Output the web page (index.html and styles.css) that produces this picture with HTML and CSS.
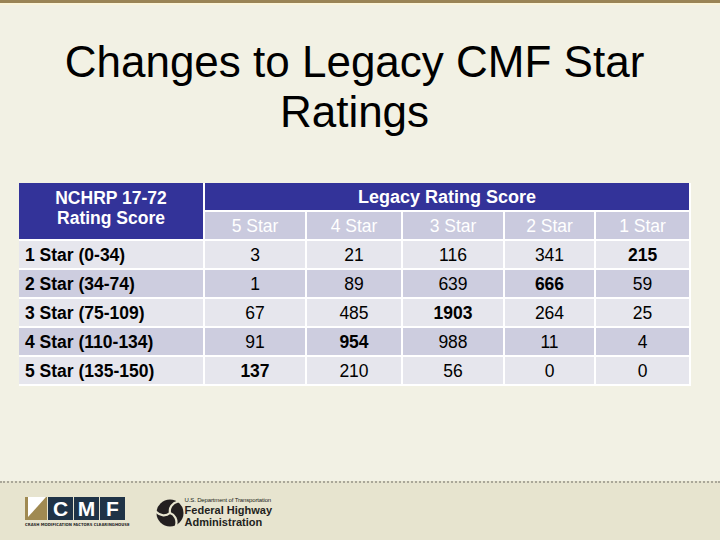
FILE: index.html
```html
<!DOCTYPE html>
<html lang="en">
<head>
<meta charset="utf-8">
<title>Changes to Legacy CMF Star Ratings</title>
<link rel="stylesheet" href="styles.css">
</head>
<body>
<div class="slide">
  <div class="topbar"></div>
  <h1 class="title">Changes to Legacy CMF Star<br>Ratings</h1>
  <table class="ratings">
    <colgroup>
      <col class="c0"><col class="c1"><col class="c2"><col class="c3"><col class="c4"><col class="c5">
    </colgroup>
    <thead>
      <tr>
        <th rowspan="2" class="corner">NCHRP 17-72<br>Rating Score</th>
        <th colspan="5" class="group">Legacy Rating Score</th>
      </tr>
      <tr class="sub">
        <th>5 Star</th><th>4 Star</th><th>3 Star</th><th>2 Star</th><th>1 Star</th>
      </tr>
    </thead>
    <tbody>
      <tr class="light">
        <td class="label">1 Star (0-34)</td><td>3</td><td>21</td><td>116</td><td>341</td><td class="hi">215</td>
      </tr>
      <tr class="dark">
        <td class="label">2 Star (34-74)</td><td>1</td><td>89</td><td>639</td><td class="hi">666</td><td>59</td>
      </tr>
      <tr class="light">
        <td class="label">3 Star (75-109)</td><td>67</td><td>485</td><td class="hi">1903</td><td>264</td><td>25</td>
      </tr>
      <tr class="dark">
        <td class="label">4 Star (110-134)</td><td>91</td><td class="hi">954</td><td>988</td><td>11</td><td>4</td>
      </tr>
      <tr class="light">
        <td class="label">5 Star (135-150)</td><td class="hi">137</td><td>210</td><td>56</td><td>0</td><td>0</td>
      </tr>
    </tbody>
  </table>
  <footer class="footer">
    <div class="cmf">
      <div class="cmf-mark">
        <svg class="cmf-corner" width="22" height="23" viewBox="0 0 22 23">
          <rect width="22" height="23" fill="#a08a52"/>
          <path d="M3 0 H21 Q13 9 3 20 Z" fill="#ffffff"/>
        </svg>
        <span class="cmf-box">C</span><span class="cmf-box">M</span><span class="cmf-box">F</span>
      </div>
      <div class="cmf-tag">CRASH MODIFICATION FACTORS CLEARINGHOUSE</div>
    </div>
    <div class="fhwa">
      <svg class="fhwa-mark" width="28" height="28" viewBox="0 0 28 28">
        <circle cx="14" cy="14" r="13.5" fill="#231f20"/>
        <g fill="none" stroke="#e8e5d0" stroke-width="2.2" stroke-linecap="round">
          <path d="M14 14 C13 9 16 4 22 2.5"/>
          <path d="M14 14 C13 9 16 4 22 2.5" transform="rotate(120 14 14)"/>
          <path d="M14 14 C13 9 16 4 22 2.5" transform="rotate(240 14 14)"/>
        </g>
      </svg>
      <div class="fhwa-text">
        <div class="fhwa-dept">U.S. Department of Transportation</div>
        <div class="fhwa-name">Federal Highway<br>Administration</div>
      </div>
    </div>
  </footer>
</div>
</body>
</html>
```

FILE: styles.css
```css
html, body {
  margin: 0;
  padding: 0;
}

body {
  background: #f2f1e4;
  font-family: "Liberation Sans", Arial, sans-serif;
  color: #000;
}

.slide {
  width: 720px;
  height: 540px;
  display: flex;
  flex-direction: column;
  overflow: hidden;
}

.topbar {
  flex: none;
  height: 3px;
  background: #9a8456;
  border-bottom: 2px solid #fbf4d8;
}

.title {
  flex: none;
  margin: 32px 11px 0 0;
  font-size: 44px;
  line-height: 50px;
  font-weight: normal;
  text-align: center;
}

.ratings {
  flex: none;
  margin: 46px 0 0 19px;
  width: 672px;
  table-layout: fixed;
  border-collapse: separate;
  border-spacing: 0;
}

.c0 { width: 186px; }
.c1 { width: 102px; }
.c2 { width: 96px; }
.c3 { width: 102px; }
.c4 { width: 91px; }
.c5 { width: 95px; }

.ratings th,
.ratings td {
  padding: 2px 0 0;
  font-size: 17.5px;
  line-height: 25px;
  text-align: center;
  border-right: 2px solid #fff;
  border-bottom: 2px solid #fff;
  white-space: nowrap;
}

.ratings .corner {
  background: #333399;
  color: #fff;
  font-weight: bold;
  vertical-align: top;
  padding-top: 5px;
  line-height: 20px;
}

.ratings .group {
  background: #333399;
  color: #fff;
  font-weight: bold;
  font-size: 18px;
}

.sub th {
  background: #cacade;
  color: #fff;
  font-weight: normal;
}

.light td { background: #e6e6ed; }
.dark td { background: #cdcddf; }

.ratings .label {
  text-align: left;
  padding-left: 6px;
  font-weight: bold;
}

.ratings .hi { font-weight: bold; }

.footer {
  margin-top: auto;
  flex: none;
  height: 43px;
  padding: 14px 0 0 25px;
  border-top: 2px dotted #aaa799;
  background: #e7e4cf;
  display: flex;
  align-items: flex-start;
}

.cmf {
  display: flex;
  flex-direction: column;
  gap: 2px;
}

.cmf-mark {
  display: flex;
  gap: 1px;
}

.cmf-corner { display: block; }

.cmf-box {
  width: 25px;
  height: 23px;
  background: #1f3347;
  color: #fff;
  font-weight: bold;
  font-size: 21px;
  line-height: 23px;
  text-align: center;
}

.cmf-tag {
  font-family: "DejaVu Sans Condensed", "Liberation Sans", sans-serif;
  font-weight: bold;
  font-size: 4.2px;
  line-height: 5px;
  color: #2a2a2a;
  white-space: nowrap;
}

.fhwa {
  margin-left: 26px;
  display: flex;
  align-items: center;
  gap: 1px;
  color: #231f20;
}

.fhwa-mark { display: block; }

.fhwa-dept {
  font-size: 6px;
  line-height: 7px;
  letter-spacing: -0.15px;
}

.fhwa-name {
  font-weight: bold;
  font-size: 11px;
  line-height: 12px;
}
```
